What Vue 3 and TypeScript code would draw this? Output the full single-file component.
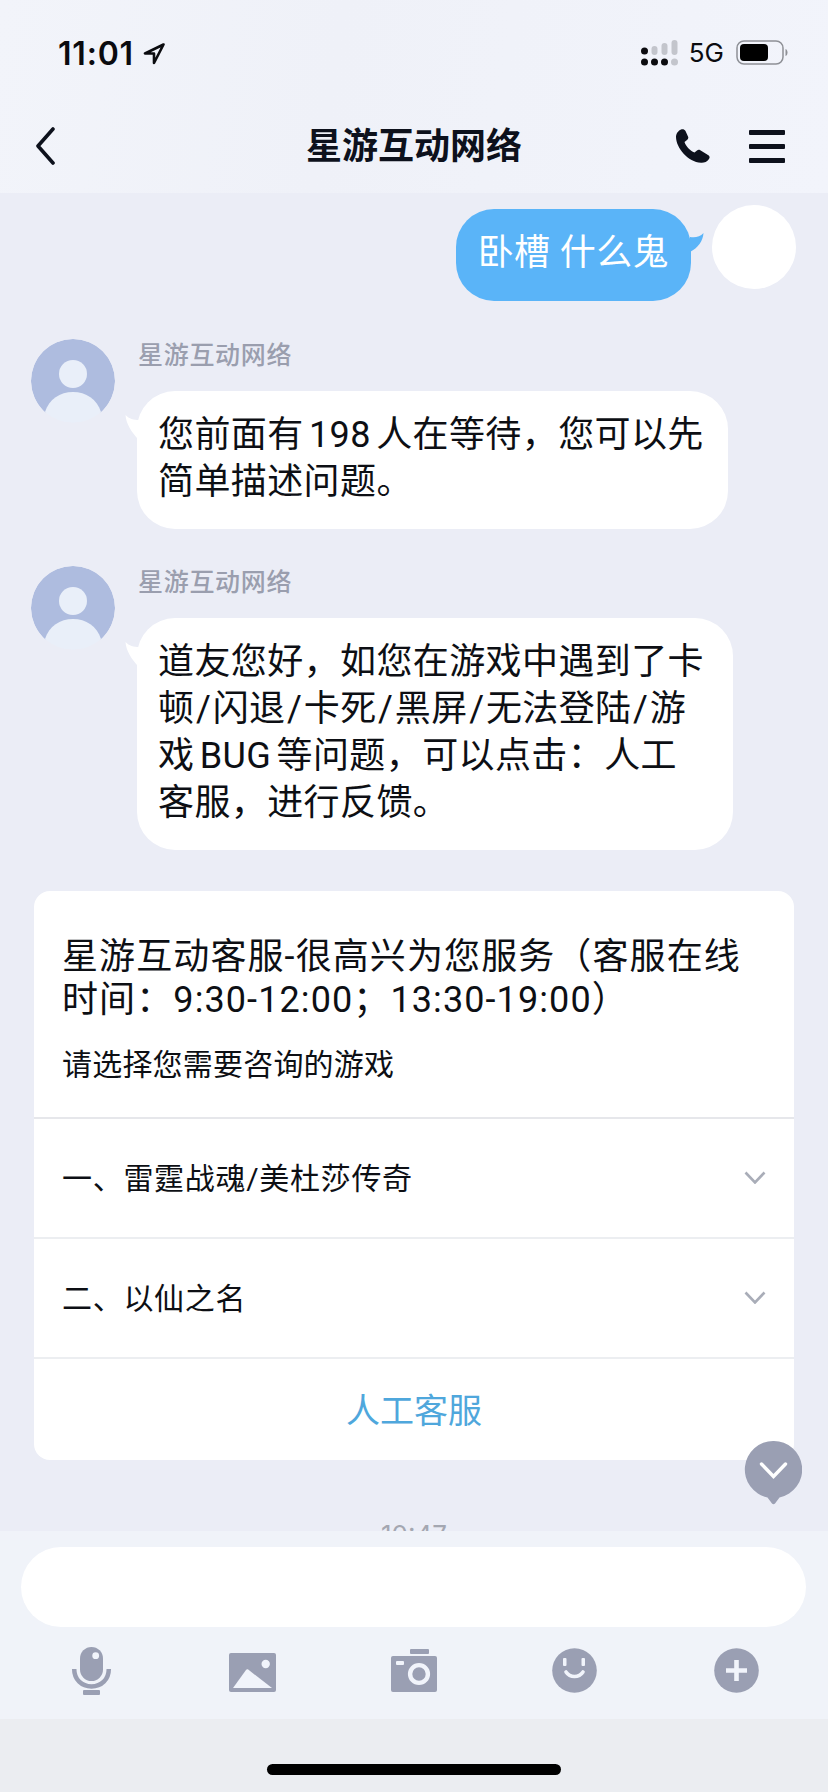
<script setup lang="ts">
const peerName = '星游互动网络'

const peerMessages: string[][] = [
  ['您前面有 198 人在等待，您可以先', '简单描述问题。'],
  ['道友您好，如您在游戏中遇到了卡', '顿/闪退/卡死/黑屏/无法登陆/游', '戏 BUG 等问题，可以点击：人工', '客服，进行反馈。'],
]

const games = ['一、雷霆战魂/美杜莎传奇', '二、以仙之名']
</script>

<template>
  <div class="phone">
    <header class="top">
      <div class="status">
        <div class="clock">
          <span>11:01</span>
          <svg class="loc" viewBox="0 0 22 22"><path d="M20.500 1.500 2 10.500h9V20Z" fill="none" stroke="#0b0b0f" stroke-width="2.600" stroke-linejoin="round" /></svg>
        </div>
        <div class="status-right">
          <svg class="signal" width="38" height="26" viewBox="0 0 38 26">
            <circle cx="3.500" cy="11" r="3.500" fill="#0b0b0f" />
            <rect x="10.500" y="6" width="6" height="9" rx="3" fill="#c3c5cc" />
            <rect x="20.500" y="3" width="6" height="12" rx="3" fill="#c3c5cc" />
            <rect x="30.500" y="0" width="6" height="15" rx="3" fill="#c3c5cc" />
            <circle cx="3.500" cy="22" r="3.500" fill="#0b0b0f" />
            <circle cx="13.500" cy="22" r="3.500" fill="#0b0b0f" />
            <circle cx="23.500" cy="22" r="3.500" fill="#0b0b0f" />
            <circle cx="33.500" cy="22" r="3.500" fill="#c3c5cc" />
          </svg>
          <span class="net">5G</span>
          <svg class="battery" width="52" height="26" viewBox="0 0 52 26">
            <rect x="1" y="1" width="46" height="23" rx="7" fill="none" stroke="#8e9096" stroke-width="1.500" />
            <rect x="4" y="4" width="28" height="17" rx="4" fill="#000" />
            <path d="M49.500 9c1.500.5 2 2 2 3.500s-.5 3-2 3.500Z" fill="#8e9096" />
          </svg>
        </div>
      </div>
      <nav class="nav">
        <svg class="back" width="20" height="38" viewBox="0 0 20 38"><path d="M18 2 3 19l15 17" fill="none" stroke="#0d111c" stroke-width="3.600" stroke-linecap="round" stroke-linejoin="round" /></svg>
        <h1 class="title">{{ peerName }}</h1>
        <div class="nav-actions">
          <svg class="phone-icon" width="34" height="34" viewBox="0 0 34 34"><path d="M5 .5C7-.2 8.500.5 9.500 2L12 7.500c.7 1.500.2 2.500-1 3.500l-2.500 2c1.500 4.500 5.500 8.500 10 10.500l2.500-2c1-.8 2.200-.8 3.300-.2L32 26c1.800 1 2 2.500 1 4-2 3-5 4-8 3.800C12 33 .2 19 0 8 0 4.500 2.500 1.500 5 .5Z" fill="#0d111c" /></svg>
          <div class="menu"><i></i><i></i><i></i></div>
        </div>
      </nav>
    </header>

    <main class="chat">
      <div class="me-row">
        <div class="bubble bubble-me">卧槽 什么鬼<svg class="tail tail-me" width="14" height="20" viewBox="0 0 14 20"><path d="M0 4C5 5 10 4 13.500 0 13 8 8 15 0 19Z" fill="#5ab4f8" /></svg></div>
        <div class="avatar avatar-me"></div>
      </div>

      <div v-for="(lines, i) in peerMessages" :key="i" class="peer-row">
        <div class="avatar">
          <svg width="84" height="84" viewBox="0 0 84 84">
            <path d="M14 73.300A42 42 0 1 1 70 73.300Z" fill="#aebcdf" />
            <circle cx="42" cy="35" r="14" fill="#e9eff9" />
            <path d="M14 73C18 60 29 53 42 53s24 7 28 20a42 42 0 0 1-56 0Z" fill="#e9eff9" />
          </svg>
        </div>
        <div class="peer-body">
          <div class="peer-name">{{ peerName }}</div>
          <div class="bubble bubble-peer" :class="{ 'bubble-long': lines.length > 2 }">
            <svg class="tail tail-peer" width="14" height="26" viewBox="0 0 14 26"><path d="M14 5C9 5 4 4 .5 0 1 8 6 17 14 25Z" fill="#fff" /></svg>
            <div v-for="line in lines" :key="line">
              <template v-for="(part, p) in line.split('/')" :key="p"><span v-if="p > 0" class="slash">/</span>{{ part }}</template>
            </div>
          </div>
        </div>
      </div>

      <section class="card">
        <div class="card-head">
          <p class="card-title">星游互动客服-很高兴为您服务（客服在线<br />时间：9:30-12:00；13:30-19:00）</p>
          <p class="card-sub">请选择您需要咨询的游戏</p>
        </div>
        <div v-for="game in games" :key="game" class="card-row">
          <span>{{ game }}</span>
          <svg width="22" height="13" viewBox="0 0 22 13"><path d="M1.500 1.500 11 11.500l9.500-10" fill="none" stroke="#a9adb8" stroke-width="2.600" /></svg>
        </div>
        <div class="card-action">人工客服</div>
      </section>

      <div class="time">10:47</div>

      <div class="to-bottom">
        <svg width="58" height="64" viewBox="0 0 58 64">
          <path d="M29.500 0a28.500 28.500 0 0 1 6 56.400l-4.500 6.100c-.8 1-2.200 1-3 0l-4.500-6.100A28.500 28.500 0 0 1 29.500 0Z" fill="#9a9fb3" />
          <path d="M17.500 23 29.500 35.500 41.500 23" fill="none" stroke="#fff" stroke-width="3.400" stroke-linecap="round" />
        </svg>
      </div>
    </main>

    <footer class="composer">
      <div class="input"></div>
      <div class="tools">
        <svg width="48" height="50" viewBox="0 0 48 50">
          <rect x="13" y="0" width="23" height="34" rx="11.500" fill="#9a9fb3" />
          <circle cx="28.700" cy="8.700" r="3.400" fill="#f1f4fb" />
          <path d="M7.200 22c0 10.500 7.500 17.500 17.300 17.500S41.800 32.500 41.800 22" fill="none" stroke="#9a9fb3" stroke-width="4.500" />
          <rect x="16" y="43" width="17" height="5" rx="1" fill="#9a9fb3" />
        </svg>
        <svg width="48" height="50" viewBox="0 0 48 50">
          <rect x="0" y="6" width="47" height="39" rx="2" fill="#9a9fb3" />
          <circle cx="36.700" cy="17" r="4.200" fill="#f1f4fb" />
          <path d="M4 41 17 23c.6-.8 1.400-.9 2.200-.4L43 41Z" fill="#f1f4fb" />
        </svg>
        <svg width="48" height="50" viewBox="0 0 48 50">
          <rect x="19" y="2" width="19" height="5" rx="1" fill="#9a9fb3" />
          <rect x="0" y="9" width="46" height="36" rx="2" fill="#9a9fb3" />
          <rect x="5" y="14" width="8" height="4" rx="1" fill="#f1f4fb" />
          <circle cx="28" cy="27" r="8.900" fill="none" stroke="#f1f4fb" stroke-width="4.400" />
        </svg>
        <svg width="48" height="50" viewBox="0 0 48 50">
          <circle cx="22.500" cy="23.500" r="22.300" fill="#9a9fb3" />
          <rect x="11" y="11" width="3.500" height="8" rx="1" fill="#f1f4fb" />
          <rect x="29.500" y="11" width="3.500" height="8" rx="1" fill="#f1f4fb" />
          <path d="M14 25c2 3 5 4.500 8.500 4.500S29 28 31 25" fill="none" stroke="#f1f4fb" stroke-width="3.600" stroke-linecap="round" />
        </svg>
        <svg width="48" height="50" viewBox="0 0 48 50">
          <circle cx="22.500" cy="23.500" r="22.300" fill="#9a9fb3" />
          <path d="M22.500 13v21M12 23.500h21" fill="none" stroke="#f1f4fb" stroke-width="4.600" />
        </svg>
      </div>
    </footer>

    <div class="safe"><span class="home"></span></div>
  </div>
</template>

<style scoped>
.phone {
  width: 828px;
  height: 1792px;
  display: flex;
  flex-direction: column;
  overflow: hidden;
  background: #ebedf6;
  color: #0d0f14;
  font-family: Roboto, "Noto Sans CJK SC", sans-serif;
}

.top {
  height: 193px;
  flex: none;
  background: linear-gradient(100deg, #f2f4fa 0%, #eff1f8 40%, #f2f4fb 100%);
}

.status {
  height: 88px;
  padding: 36px 40px 0 58px;
  box-sizing: border-box;
  display: flex;
  justify-content: space-between;
  align-items: flex-start;
  font-family: Inter, "Noto Sans CJK SC", sans-serif;
}

.clock {
  display: flex;
  align-items: center;
  gap: 9px;
  font-size: 32px;
  font-weight: 600;
  line-height: 36px;
  letter-spacing: 0.8px;
  color: #0b0b0f;
}

.loc {
  width: 22px;
  height: 22px;
}

.status-right {
  display: flex;
  align-items: center;
  margin-top: 2px;
}

.net {
  margin-left: 10px;
  font-size: 26px;
  line-height: 30px;
  color: #0b0b0f;
}

.battery {
  margin-left: 12px;
}

.nav {
  height: 105px;
  padding: 11px 43px 0 35px;
  box-sizing: border-box;
  display: flex;
  align-items: center;
  justify-content: space-between;
  position: relative;
}

.title {
  position: absolute;
  left: 0;
  right: 0;
  top: 37px;
  margin: 0;
  text-align: center;
  font-size: 36px;
  line-height: 44px;
  font-weight: 700;
  color: #0d111c;
}

.nav-actions {
  display: flex;
  align-items: center;
  gap: 39px;
}

.menu {
  width: 36px;
  display: flex;
  flex-direction: column;
  gap: 9px;
}

.menu i {
  display: block;
  height: 5px;
  border-radius: 1px;
  background: #0d111c;
}

.chat {
  flex: 1;
  min-height: 0;
  overflow: hidden;
  position: relative;
  padding-top: 12px;
}

.me-row {
  display: flex;
  justify-content: flex-end;
  align-items: flex-start;
  padding-right: 32px;
  gap: 21px;
  margin-bottom: 38px;
}

.avatar {
  width: 84px;
  height: 84px;
  flex: none;
  border-radius: 50%;
  overflow: hidden;
}

.avatar-me {
  background: #fff;
}

.bubble {
  position: relative;
  font-size: 36px;
  line-height: 47px;
  letter-spacing: 0.4px;
  white-space: nowrap;
  box-sizing: border-box;
}

.bubble-me {
  margin-top: 4px;
  height: 92px;
  line-height: 88px;
  padding: 0 22px;
  border-radius: 38px;
  background: #5ab4f8;
  color: #fff;
}

.tail {
  position: absolute;
}

.tail-me {
  right: -13px;
  top: 24px;
}

.bubble-peer {
  width: fit-content;
  padding: 21px 24px 23px 21px;
  border-radius: 38px;
  background: #fff;
  word-spacing: -4px;
}

.bubble-long {
  padding-right: 29px;
}

.tail-peer {
  left: -12px;
  top: 24px;
}

.slash {
  margin: 0 1.500px;
}

.peer-row {
  display: flex;
  align-items: flex-start;
  padding-left: 31px;
  gap: 22px;
  margin-bottom: 37px;
}

.peer-name {
  height: 52px;
  font-size: 25px;
  line-height: 33px;
  letter-spacing: 0.7px;
  font-weight: 500;
  color: #9a9eae;
  padding-left: 1px;
}

.card {
  margin: 41px 34px 0;
  background: #fff;
  border-radius: 16px;
  overflow: hidden;
}

.card-head {
  height: 228px;
  box-sizing: border-box;
  padding: 45px 28px 0;
  border-bottom: 2px solid #e6e7eb;
}

.card-title {
  margin: 0;
  font-size: 36px;
  line-height: 43px;
  letter-spacing: 1.100px;
}

.card-sub {
  margin: 22px 0 0;
  font-size: 30px;
  line-height: 42px;
  letter-spacing: 0.2px;
}

.card-row {
  height: 120px;
  box-sizing: border-box;
  padding: 0 28px 4px;
  border-bottom: 2px solid #eceef1;
  display: flex;
  align-items: center;
  justify-content: space-between;
  font-size: 30px;
  letter-spacing: 0.7px;
}

.card-row svg {
  margin-top: 3px;
}

.card-action {
  height: 101px;
  box-sizing: border-box;
  padding-bottom: 2px;
  display: flex;
  align-items: center;
  justify-content: center;
  font-size: 34px;
  color: #4fa7dc;
}

.time {
  margin-top: 60px;
  text-align: center;
  font-family: Inter, sans-serif;
  font-size: 26px;
  line-height: 30px;
  color: #a4a7b1;
}

.to-bottom {
  position: absolute;
  right: 26px;
  top: 1248px;
  height: 64px;
}

.composer {
  height: 188px;
  flex: none;
  position: relative;
  background: #f0f3f9;
  padding: 16px 22px 0 21px;
  box-sizing: border-box;
}

.input {
  height: 80px;
  border-radius: 40px;
  background: #fff;
}

.tools {
  margin-top: 20px;
  padding: 0 44px 0 46px;
  display: flex;
  justify-content: space-between;
  align-items: flex-start;
}

.safe {
  height: 73px;
  flex: none;
  background: #ebedf1;
  position: relative;
  display: flex;
  justify-content: center;
  padding-top: 45px;
  box-sizing: border-box;
}

.home {
  display: block;
  width: 294px;
  height: 11px;
  border-radius: 6px;
  background: #000;
}
</style>
